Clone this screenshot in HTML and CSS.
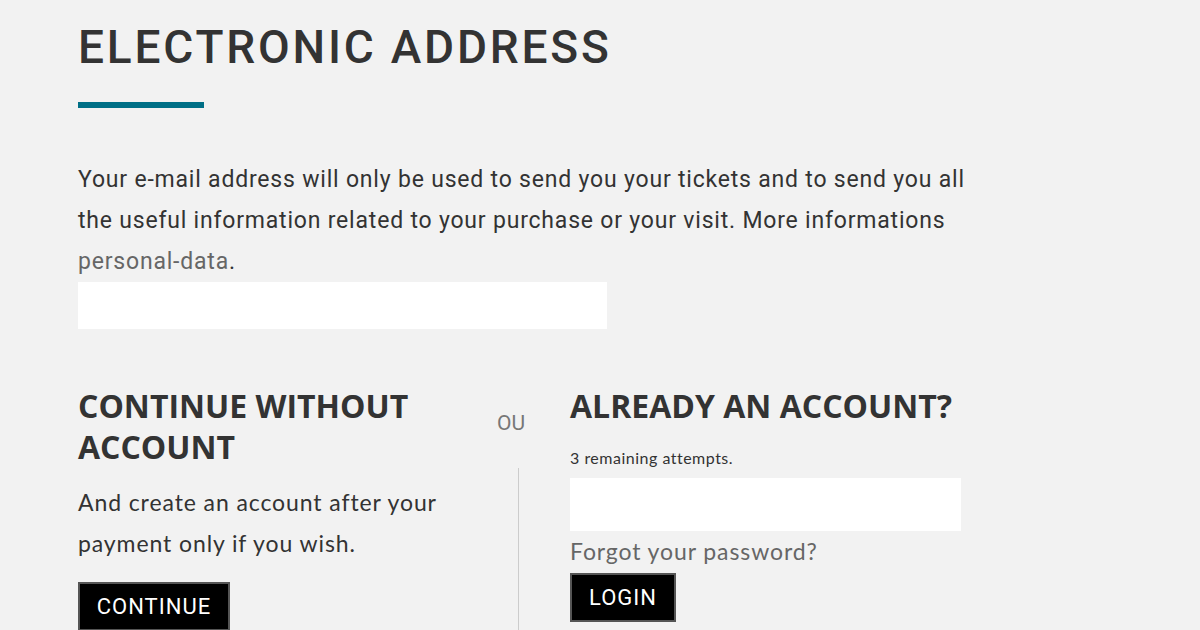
FILE: index.html
```html
<!DOCTYPE html>
<html lang="en">
<head>
  <meta charset="UTF-8">
  <title>Electronic address</title>
  <meta name="viewport" content="width=device-width, initial-scale=1.0">
  <link rel="stylesheet" href="styles.css">
</head>
<body>
  <div class="page">
    <h1 class="title">ELECTRONIC ADDRESS</h1>
    <div class="title-bar"></div>

    <p class="intro">
      Your e-mail address will only be used to send you your tickets and to send you all
      the useful information related to your purchase or your visit. More informations
      <a href="#" class="link">personal-data</a>.
    </p>
    <input type="email" class="field field-email">

    <div class="choices">
      <div class="col col-guest">
        <h2 class="heading">CONTINUE WITHOUT ACCOUNT</h2>
        <p class="text">And create an account after your payment only if you wish.</p>
        <button class="btn">CONTINUE</button>
      </div>

      <div class="col-sep">
        <span class="sep-label">OU</span>
        <div class="sep-line"></div>
      </div>

      <div class="col col-login">
        <h2 class="heading">ALREADY AN ACCOUNT?</h2>
        <p class="attempts">3 remaining attempts.</p>
        <input type="password" class="field field-pass">
        <a href="#" class="forgot">Forgot your password?</a>
        <button class="btn">LOGIN</button>
      </div>
    </div>
  </div>
</body>
</html>
```

FILE: styles.css
```css
body {
  margin: 0;
  background: #f2f2f2;
  color: #333;
  font-family: Roboto, "Liberation Sans", sans-serif;
  overflow: hidden;
}

.page {
  padding: 20px 0 0 78px;
  height: 610px;
}

.title {
  margin: 0;
  font-size: 46px;
  line-height: 55px;
  font-weight: 500;
  color: #333;
  letter-spacing: 2.8px;
}

.title-bar {
  width: 126px;
  height: 6px;
  background: #006f86;
  margin-top: 27px;
}

.intro {
  margin: 51px 0 0 0;
  width: 900px;
  font-size: 23px;
  line-height: 41px;
  letter-spacing: 0.8px;
  color: #333;
}

.link {
  color: #666;
  text-decoration: none;
}

.field {
  display: block;
  border: none;
  background: #fff;
  outline: none;
  padding: 0;
}

.field-email {
  width: 529px;
  height: 47px;
  margin-top: 0;
}

.choices {
  display: flex;
  margin-top: 56px;
}

.col-guest {
  width: 412px;
}

.heading {
  margin: 0;
  font-family: "Open Sans", sans-serif;
  font-weight: 700;
  font-size: 32px;
  line-height: 41px;
  color: #333;
}

.text {
  margin: 15px 0 0 0;
  font-family: Lato, sans-serif;
  font-size: 23px;
  line-height: 41px;
  letter-spacing: 0.9px;
}

.btn {
  display: block;
  background: #000;
  color: #fff;
  border: 2px solid #555;
  font-family: Roboto, sans-serif;
  font-size: 22px;
  letter-spacing: 1px;
  padding: 0;
  height: 49px;
  cursor: pointer;
}

.col-guest .btn {
  margin-top: 18px;
  width: 152px;
}

.col-sep {
  width: 56px;
  display: flex;
  flex-direction: column;
  padding-top: 26px;
}

.sep-label {
  margin-left: 7px;
  font-size: 21px;
  line-height: 24px;
  color: #777;
}

.sep-line {
  margin: 33px 0 0 28px;
  width: 1px;
  flex: 1;
  background: #ccc;
  min-height: 200px;
}

.col-login {
  margin-left: 24px;
}

.attempts {
  margin: 22px 0 0 0;
  font-family: Lato, sans-serif;
  font-size: 16px;
  line-height: 20px;
  letter-spacing: 0.5px;
}

.field-pass {
  width: 391px;
  height: 53px;
  margin-top: 10px;
}

.forgot {
  display: block;
  margin-top: 1px;
  font-family: Lato, sans-serif;
  font-size: 23px;
  line-height: 38px;
  letter-spacing: 0.9px;
  color: #666;
  text-decoration: none;
}

.col-login .btn {
  margin-top: 3px;
  width: 106px;
}
```
